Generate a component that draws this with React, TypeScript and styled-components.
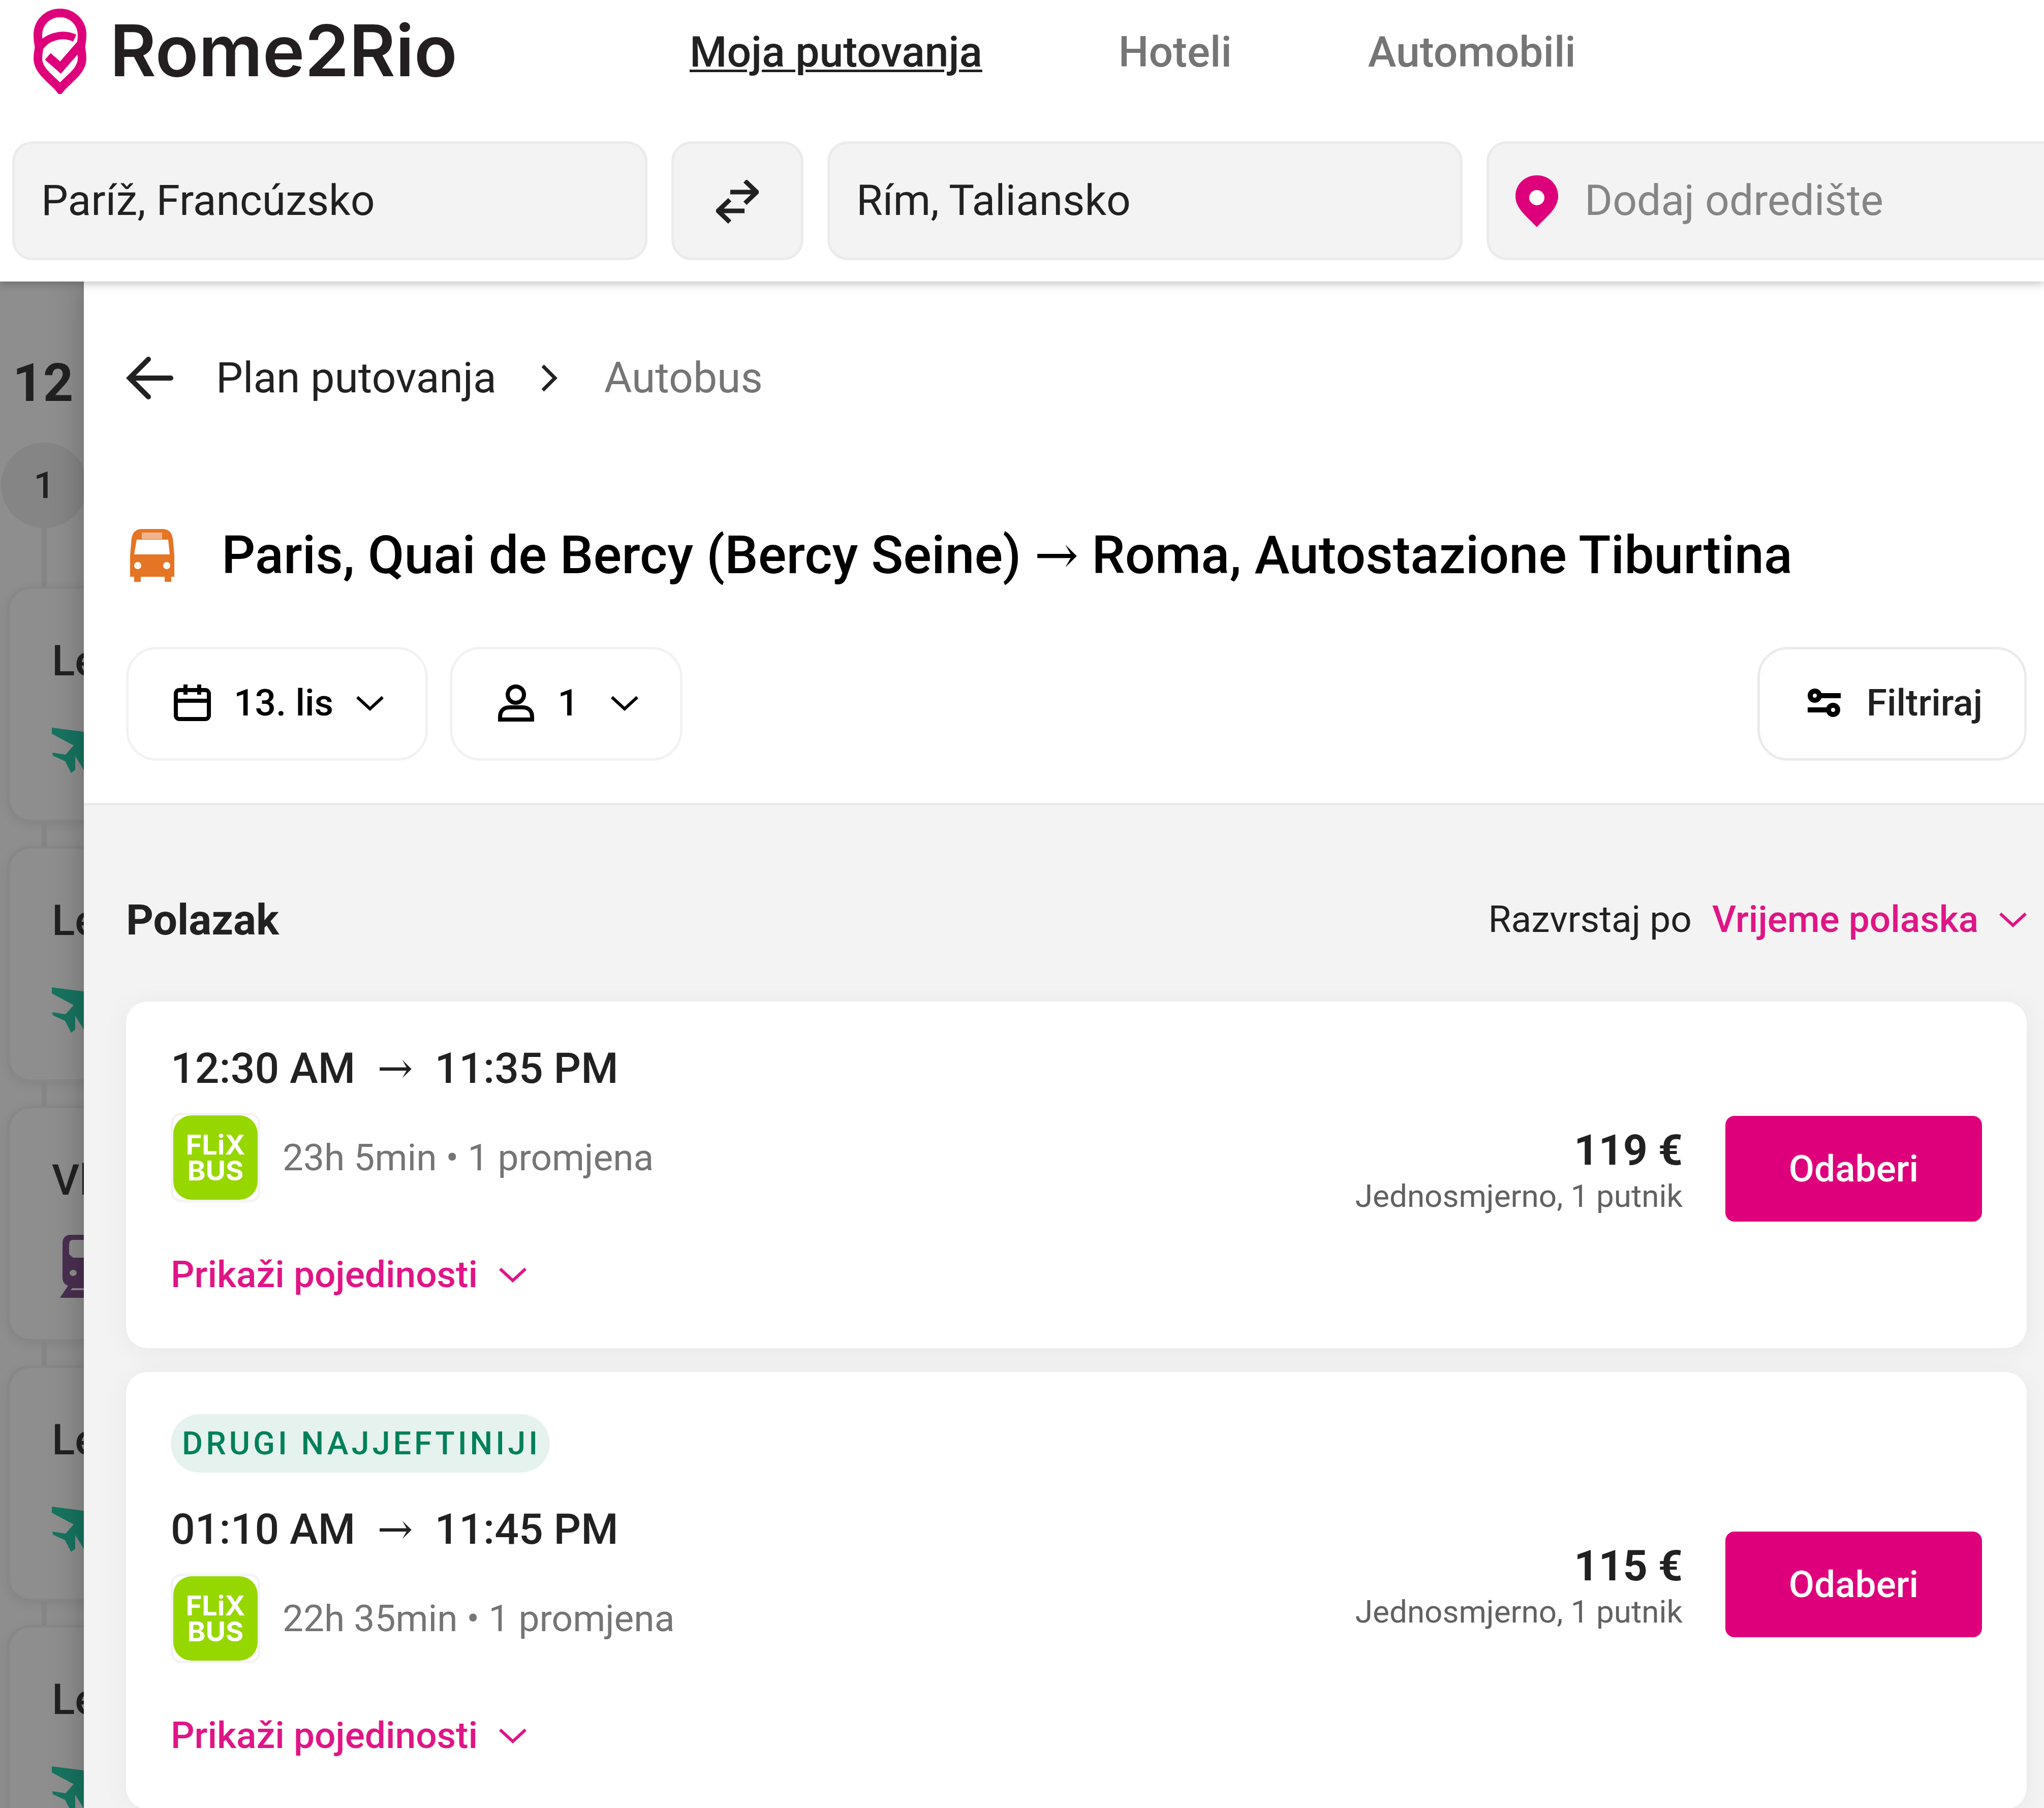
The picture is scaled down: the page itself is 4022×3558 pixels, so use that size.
import React from 'react';
import styled, { createGlobalStyle } from 'styled-components';

const pink = '#de007b';
const linkPink = '#e01586';
const ink = '#212121';
const muted = '#757575';

const GlobalStyle = createGlobalStyle`
  *, *::before, *::after { box-sizing: border-box; }
  body {
    margin: 0;
    background: #fff;
    color: ${ink};
    font-family: Roboto, "DejaVu Serif", sans-serif;
    font-size: 84px;
  }
  button, input, select { font: inherit; color: inherit; margin: 0; }
  svg { display: block; flex: none; }
`;

/* ---------- layout ---------- */

const Page = styled.div`
  display: flex;
  flex-direction: column;
  height: 100vh;
  overflow: hidden;
`;

const Header = styled.header`
  position: relative;
  z-index: 2;
  flex: none;
  background: #fff;
  padding-bottom: 42px;
  box-shadow: 0 5px 16px rgba(0, 0, 0, 0.23);
`;

const TopBar = styled.div`
  display: flex;
  align-items: center;
  height: 202px;
  padding-left: 66px;
`;

const Brand = styled.a`
  display: flex;
  align-items: center;
  gap: 46px;
  width: 1291px;
  color: #231f20;
  text-decoration: none;
`;

const Wordmark = styled.span`
  padding-bottom: 4px;
  font-family: Inter, sans-serif;
  font-size: 140px;
  font-weight: 600;
  line-height: 188px;
`;

const Nav = styled.nav`
  display: flex;
  gap: 268px;
  padding-top: 4px;
`;

const NavLink = styled.a<{ $active?: boolean }>`
  font-weight: 500;
  line-height: 120px;
  color: ${(p) => (p.$active ? ink : muted)};
  text-decoration: ${(p) => (p.$active ? 'underline' : 'none')};
  text-decoration-thickness: 5px;
  text-underline-offset: 6px;
`;

const SearchRow = styled.form`
  display: flex;
  gap: 47px;
  margin-top: 76px;
  padding-left: 24px;
  overflow: hidden;
`;

const Field = styled.label`
  display: flex;
  align-items: center;
  flex: none;
  gap: 52px;
  width: 1250px;
  height: 234px;
  padding: 0 52px;
  border: 5px solid #ebebeb;
  border-radius: 40px;
  background: #f3f3f3;
`;

const FieldInput = styled.input`
  flex: 1;
  min-width: 0;
  padding: 0;
  border: 0;
  outline: 0;
  background: none;
  line-height: 120px;
  &::placeholder { color: #858585; opacity: 1; }
`;

const SwapButton = styled.button`
  display: flex;
  align-items: center;
  justify-content: center;
  flex: none;
  width: 260px;
  padding: 4px 0 0;
  border: 5px solid #ebebeb;
  border-radius: 40px;
  background: #f3f3f3;
`;

const Body = styled.div`
  display: flex;
  flex: 1;
  min-height: 0;
`;

/* ---------- dimmed rail behind the panel ---------- */

const Rail = styled.aside`
  flex: none;
  width: 165px;
  overflow: hidden;
  padding-top: 140px;
  background: #8e8e8e;
`;

const RailCount = styled.div`
  padding-left: 25px;
  font-size: 104px;
  font-weight: 700;
  line-height: 120px;
`;

const RailStep = styled.div`
  display: flex;
  align-items: center;
  justify-content: center;
  width: 170px;
  height: 168px;
  margin: 57px 0 0 2px;
  border-radius: 50%;
  background: #858585;
  font-size: 73px;
  font-weight: 500;
`;

const Connector = styled.div<{ $height: number }>`
  width: 10px;
  height: ${(p) => p.$height}px;
  margin-left: 82px;
  background: #858585;
`;

const RailCard = styled.div`
  width: 1200px;
  height: 464px;
  margin-left: 14px;
  padding: 92px 0 0 83px;
  border: 5px solid #878787;
  border-radius: 46px;
  background: #8e8e8e;
  box-shadow: 0 5px 20px rgba(0, 0, 0, 0.08);
`;

const RailTitle = styled.div`
  margin-bottom: 53px;
  font-weight: 500;
  line-height: 100px;
`;

/* ---------- panel ---------- */

const Panel = styled.main`
  position: relative;
  z-index: 1;
  flex: 1;
  min-width: 0;
  background: #f3f3f3;
  box-shadow: 0 0 60px rgba(0, 0, 0, 0.26);
`;

const PanelHead = styled.section`
  padding: 130px 34px 83px 83px;
  border-bottom: 5px solid #eaeaea;
  background: #fff;
`;

const Breadcrumb = styled.nav`
  display: flex;
  align-items: center;
  line-height: 120px;
`;

const BackButton = styled.button`
  display: flex;
  margin-right: 83px;
  padding: 0;
  border: 0;
  background: none;
`;

const Crumb = styled.a`
  color: ${ink};
  text-decoration: none;
`;

const CrumbCurrent = styled.span`
  color: ${muted};
`;

const CrumbArrow = styled.span`
  padding: 0 92px 0 88px;
`;

const Title = styled.h1`
  display: flex;
  align-items: center;
  gap: 84px;
  margin: 221px 0 112px;
  color: #000;
  font-size: 104px;
  font-weight: 500;
  line-height: 136px;
  white-space: nowrap;
`;

const Toolbar = styled.div`
  display: flex;
  gap: 43px;
`;

const PillButton = styled.button<{ $end?: boolean }>`
  display: flex;
  align-items: center;
  gap: 45px;
  height: 224px;
  margin-left: ${(p) => (p.$end ? 'auto' : '0')};
  padding: 0 82px 4px 89px;
  border: 5px solid ${(p) => (p.$end ? '#ebebeb' : '#f2f2f2')};
  border-radius: 60px;
  background: #fff;
  color: ${(p) => (p.$end ? ink : '#000')};
  font-size: 73px;
  font-weight: 500;
`;

const Count = styled.span`
  min-width: 60px;
  text-align: left;
`;

const Results = styled.section`
  padding: 166px 34px 47px 83px;
`;

const ResultsHead = styled.div`
  display: flex;
  align-items: center;
  justify-content: space-between;
  margin-bottom: 100px;
`;

const ResultsTitle = styled.h2`
  margin: 0;
  font-size: 84px;
  font-weight: 700;
  line-height: 120px;
`;

const SortControl = styled.div`
  display: flex;
  align-items: center;
  gap: 40px;
  padding-bottom: 4px;
  color: ${linkPink};
  font-size: 73px;
  line-height: 104px;
`;

const SortLabel = styled.label`
  color: ${ink};
`;

const SortSelect = styled.select`
  appearance: none;
  padding: 0;
  border: 0;
  background: none;
  font-weight: 500;
  line-height: 104px;
`;

const TripList = styled.ul`
  display: flex;
  flex-direction: column;
  gap: 47px;
  margin: 0;
  padding: 0;
  list-style: none;
`;

const TripCard = styled.li`
  display: flex;
  align-items: center;
  justify-content: space-between;
  padding: 69px 88px 93px;
  border-radius: 42px;
  background: #fff;
  box-shadow: 0 5px 52px rgba(0, 0, 0, 0.05);
`;

const Badge = styled.span`
  display: block;
  width: fit-content;
  margin: 14px 0 49px;
  padding: 0 18px 0 22px;
  border-radius: 58px;
  background: #e5f2ed;
  color: #00805a;
  font-size: 63px;
  font-weight: 500;
  letter-spacing: 6px;
  line-height: 115px;
`;

const Times = styled.div`
  display: flex;
  gap: 43px;
  margin-bottom: 24px;
  font-weight: 500;
  line-height: 126px;
`;

const Carrier = styled.div`
  display: flex;
  align-items: center;
  gap: 44px;
  margin-bottom: 90px;
  color: ${muted};
  font-size: 73px;
  line-height: 104px;
`;

const CarrierLogo = styled.div`
  width: 176px;
  height: 176px;
  border: 5px solid #f3f3f3;
  border-radius: 20px;
  background: #fff;
`;

const CarrierTile = styled.div`
  display: flex;
  flex-direction: column;
  align-items: center;
  justify-content: center;
  height: 100%;
  border-radius: 36px;
  background: #97d700;
  color: #fff;
  font-family: Inter, sans-serif;
  font-size: 54px;
  font-weight: 700;
  line-height: 51px;
`;

const DetailsButton = styled.button`
  display: flex;
  align-items: center;
  gap: 42px;
  padding: 0;
  border: 0;
  background: none;
  color: ${linkPink};
  font-size: 73px;
  font-weight: 500;
  line-height: 104px;
`;

const Booking = styled.div`
  display: flex;
  align-items: center;
  gap: 84px;
`;

const PriceBlock = styled.div`
  text-align: right;
`;

const Price = styled.div`
  font-weight: 700;
  line-height: 108px;
`;

const PriceNote = styled.div`
  color: #616161;
  font-size: 62px;
  line-height: 72px;
`;

const SelectButton = styled.button`
  width: 505px;
  height: 208px;
  border: 0;
  border-radius: 18px;
  background: ${pink};
  color: #fff;
  font-size: 73px;
  font-weight: 500;
`;

/* ---------- icons ---------- */

const LogoMark = () => (
  <svg width="104" height="168" viewBox="0 0 104 168" fill="none" stroke={pink} strokeWidth="17" aria-hidden="true">
    <path d="M52 8.5C28 8.5 8.5 27 8.5 52C8.5 66 11 72 11 76C11 80 8.5 86 8.5 98C8.5 124 38 140 52 158C66 140 95.5 124 95.5 98C95.5 86 93 80 93 76C93 72 95.5 66 95.5 52C95.5 27 76 8.5 52 8.5Z" />
    <path d="M11 78C24 56 56 46 81 58" strokeWidth="15" />
    <path d="M28 94L53 116L93 70" />
  </svg>
);

const SwapIcon = () => (
  <svg width="84" height="86" viewBox="0 0 84 86" fill="none" stroke={ink} strokeWidth="9" aria-hidden="true">
    <path d="M28 24H80M57 2L80 24L57 46M56 61H4M27 39L4 61L27 83" />
  </svg>
);

const PinIcon = () => (
  <svg width="84" height="104" viewBox="0 0 84 104" aria-hidden="true">
    <path d="M42 2C18 2 0 20 0 43C0 68 24 84 42 104C60 84 84 68 84 43C84 20 66 2 42 2Z" fill={pink} />
    <circle cx="42" cy="46" r="15" fill="#fff" />
  </svg>
);

const BackIcon = () => (
  <svg width="94" height="84" viewBox="0 0 94 84" fill="none" stroke={ink} strokeWidth="10" strokeLinecap="round" aria-hidden="true">
    <path d="M88 42H7M44 5L7 42L44 79" />
  </svg>
);

const CrumbChevron = () => (
  <svg width="32" height="58" viewBox="0 0 32 58" fill="none" stroke={ink} strokeWidth="7" aria-hidden="true">
    <path d="M3 5L27 29L3 53" />
  </svg>
);

const ChevronDown = () => (
  <svg width="54" height="32" viewBox="0 0 54 32" fill="none" stroke="currentColor" strokeWidth="6" aria-hidden="true">
    <path d="M2 5L27 28L52 5" />
  </svg>
);

const BusIcon = () => (
  <svg width="104" height="104" viewBox="-7 0 104 104" aria-hidden="true">
    <path
      d="M22 0H67C82 2 85 12 86 28L88 52V94H82V104H69V94H22V104H9V94H1V52L3 28C4 12 7 2 22 0Z"
      fill="#e57424"
    />
    <rect x="24" y="7" width="40" height="13" fill="#f2b48e" />
    <path d="M14 21H76L79 50H9Z" fill="#fff" />
    <circle cx="16" cy="72" r="7" fill="#fff" />
    <circle cx="73" cy="72" r="7" fill="#fff" />
  </svg>
);

const CalendarIcon = () => (
  <svg width="73" height="74" viewBox="0 0 73 74" fill="none" stroke="#000" strokeWidth="8" aria-hidden="true">
    <rect x="4" y="12" width="65" height="57" rx="7" />
    <path d="M4 33H69M23 1V21M50 1V21" />
  </svg>
);

const PersonIcon = () => (
  <svg width="73" height="74" viewBox="0 0 73 74" fill="none" stroke="#000" strokeWidth="8" aria-hidden="true">
    <circle cx="36" cy="21" r="16" />
    <path d="M5 70V65C5 53 12 46 24 46H49C61 46 68 53 68 65V70Z" />
  </svg>
);

const FilterIcon = () => (
  <svg width="76" height="62" viewBox="-5 0 76 62" fill="none" stroke="#000" strokeWidth="10" aria-hidden="true">
    <circle cx="14" cy="17" r="9" />
    <circle cx="50" cy="45" r="9" />
    <path d="M23 17H65M0 45H41" />
  </svg>
);

const PlaneIcon = () => (
  <svg width="110" height="130" viewBox="0 0 110 130" fill="#17735f" aria-hidden="true">
    <path d="M0 28L62 36L88 16C98 10 108 16 104 26L66 66L82 118L72 126L46 84L46 111L38 117L26 94L2 83L1 77L27 81L43 63L0 40Z" />
  </svg>
);

const TrainIcon = () => (
  <svg width="110" height="130" viewBox="0 0 110 130" aria-hidden="true">
    <path
      fill="#4a2f50"
      fillRule="evenodd"
      d="M36 4H88C96 4 104 10 104 20V88C104 96 100 101 94 104L108 128H16L32 104C26 102 21 98 21 88V20C21 10 28 4 36 4ZM42 14C36 14 34 18 34 24V42L42 49H82L90 42V24C90 18 88 14 82 14ZM42 73A7 6 0 1 0 42 85A7 6 0 1 0 42 73ZM82 73A7 6 0 1 0 82 85A7 6 0 1 0 82 73ZM40 109L37 113H87L84 109Z"
    />
  </svg>
);

/* ---------- data ---------- */

type Trip = { badge?: string; from: string; to: string; duration: string; price: string };

const trips: Trip[] = [
  { from: '12:30 AM', to: '11:35 PM', duration: '23h 5min • 1 promjena', price: '119 €' },
  { badge: 'DRUGI NAJJEFTINIJI', from: '01:10 AM', to: '11:45 PM', duration: '22h 35min • 1 promjena', price: '115 €' },
];

const railItems = [
  { title: 'Let', icon: 'plane' },
  { title: 'Let', icon: 'plane' },
  { title: 'Vlak', icon: 'train' },
  { title: 'Let', icon: 'plane' },
  { title: 'Let', icon: 'plane' },
];

const TripRow = ({ trip }: { trip: Trip }) => (
  <TripCard>
    <div>
      {trip.badge && <Badge>{trip.badge}</Badge>}
      <Times>
        <span>{trip.from}</span>
        <span>→</span>
        <span>{trip.to}</span>
      </Times>
      <Carrier>
        <CarrierLogo>
          <CarrierTile>
            <span>FLiX</span>
            <span>BUS</span>
          </CarrierTile>
        </CarrierLogo>
        <span>{trip.duration}</span>
      </Carrier>
      <DetailsButton type="button" aria-expanded="false">
        Prikaži pojedinosti
        <ChevronDown />
      </DetailsButton>
    </div>
    <Booking>
      <PriceBlock>
        <Price>{trip.price}</Price>
        <PriceNote>Jednosmjerno, 1 putnik</PriceNote>
      </PriceBlock>
      <SelectButton type="button">Odaberi</SelectButton>
    </Booking>
  </TripCard>
);

export default function App() {
  return (
    <Page>
      <GlobalStyle />
      <Header>
        <TopBar>
          <Brand href="#">
            <LogoMark />
            <Wordmark>Rome2Rio</Wordmark>
          </Brand>
          <Nav>
            <NavLink href="#" $active>Moja putovanja</NavLink>
            <NavLink href="#">Hoteli</NavLink>
            <NavLink href="#">Automobili</NavLink>
          </Nav>
        </TopBar>
        <SearchRow>
          <Field>
            <FieldInput aria-label="Polazište" defaultValue="Paríž, Francúzsko" />
          </Field>
          <SwapButton type="button" aria-label="Zamijeni">
            <SwapIcon />
          </SwapButton>
          <Field>
            <FieldInput aria-label="Odredište" defaultValue="Rím, Taliansko" />
          </Field>
          <Field>
            <PinIcon />
            <FieldInput aria-label="Dodaj odredište" placeholder="Dodaj odredište" />
          </Field>
        </SearchRow>
      </Header>
      <Body>
        <Rail>
          <RailCount>12</RailCount>
          <RailStep>1</RailStep>
          {railItems.map((item, i) => (
            <React.Fragment key={i}>
              <Connector $height={i === 0 ? 115 : 47} />
              <RailCard>
                <RailTitle>{item.title}</RailTitle>
                {item.icon === 'train' ? <TrainIcon /> : <PlaneIcon />}
              </RailCard>
            </React.Fragment>
          ))}
        </Rail>
        <Panel>
          <PanelHead>
            <Breadcrumb>
              <BackButton type="button" aria-label="Natrag">
                <BackIcon />
              </BackButton>
              <Crumb href="#">Plan putovanja</Crumb>
              <CrumbArrow>
                <CrumbChevron />
              </CrumbArrow>
              <CrumbCurrent>Autobus</CrumbCurrent>
            </Breadcrumb>
            <Title>
              <BusIcon />
              <span>Paris, Quai de Bercy (Bercy Seine) → Roma, Autostazione Tiburtina</span>
            </Title>
            <Toolbar>
              <PillButton type="button" aria-haspopup="dialog">
                <CalendarIcon />
                13. lis
                <ChevronDown />
              </PillButton>
              <PillButton type="button" aria-haspopup="dialog">
                <PersonIcon />
                <Count>1</Count>
                <ChevronDown />
              </PillButton>
              <PillButton type="button" $end>
                <FilterIcon />
                Filtriraj
              </PillButton>
            </Toolbar>
          </PanelHead>
          <Results>
            <ResultsHead>
              <ResultsTitle>Polazak</ResultsTitle>
              <SortControl>
                <SortLabel htmlFor="sort">Razvrstaj po</SortLabel>
                <SortSelect id="sort">
                  <option>Vrijeme polaska</option>
                </SortSelect>
                <ChevronDown />
              </SortControl>
            </ResultsHead>
            <TripList>
              {trips.map((trip) => (
                <TripRow key={trip.from} trip={trip} />
              ))}
            </TripList>
          </Results>
        </Panel>
      </Body>
    </Page>
  );
}
